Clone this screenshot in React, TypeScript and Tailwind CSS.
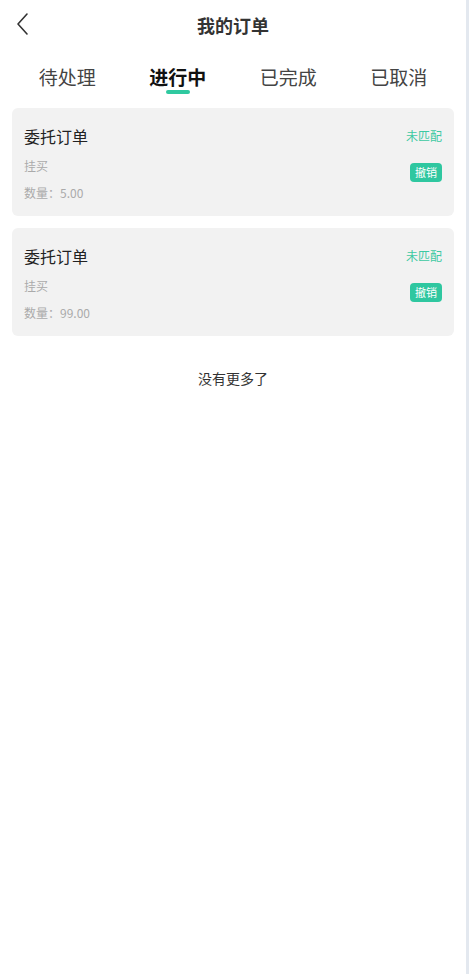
import React from "react";

const font = {
  fontFamily: '"Noto Sans CJK SC", "Noto Sans", "Liberation Sans", sans-serif',
};

const tabs = ["待处理", "进行中", "已完成", "已取消"];

const orders = [
  { title: "委托订单", type: "挂买", amount: "5.00" },
  { title: "委托订单", type: "挂买", amount: "99.00" },
];

export default function App() {
  return (
    <div
      className="flex min-h-[974px] w-[469px] bg-white text-[#333]"
      style={font}
    >
      <div className="flex-1">
        {/* Header */}
        <div className="relative flex h-[50px] items-center justify-center">
          <button className="absolute left-[14px] top-[12px] text-[#333]">
            <svg width="18" height="24" viewBox="0 0 18 24" fill="none">
              <path
                d="M13 2 L4 12 L13 22"
                stroke="currentColor"
                strokeWidth="1.6"
                strokeLinecap="round"
                strokeLinejoin="round"
              />
            </svg>
          </button>
          <h1 className="text-[18px] font-bold leading-none">我的订单</h1>
        </div>

        {/* Tabs */}
        <div className="grid grid-cols-4 px-[12px] pt-[14px]">
          {tabs.map((tab, i) => (
            <div key={tab} className="flex flex-col items-center">
              <span
                className={
                  i === 1
                    ? "text-[19px] font-bold leading-[26px] text-[#111]"
                    : "text-[19px] leading-[26px] text-[#444]"
                }
              >
                {tab}
              </span>
              <div
                className={
                  i === 1
                    ? "h-[4px] w-[24px] rounded-full bg-[#2fc9a0]"
                    : "h-[4px] w-[24px]"
                }
              />
            </div>
          ))}
        </div>

        {/* Orders */}
        <div className="mt-[14px] flex flex-col gap-[12px] px-[12px]">
          {orders.map((order, i) => (
            <div
              key={i}
              className="flex items-start justify-between rounded-[6px] bg-[#f2f2f2] px-[12px] pb-[15px] pt-[17px]"
            >
              <div className="flex flex-col">
                <span className="text-[16px] leading-[22px] text-[#222]">
                  {order.title}
                </span>
                <span className="mt-[11px] text-[12px] leading-[16px] text-[#aaa]">
                  {order.type}
                </span>
                <span className="mt-[11px] text-[12px] leading-[16px] text-[#aaa]">
                  数量：{order.amount}
                </span>
              </div>
              <div className="flex flex-col items-end">
                <span className="text-[12px] leading-[22px] text-[#3cc9a2]">
                  未匹配
                </span>
                <button className="mt-[16px] rounded-[4px] bg-[#2fc7a0] px-[5px] text-[11px] leading-[19px] text-white">
                  撤销
                </button>
              </div>
            </div>
          ))}
        </div>

        <div className="mt-[32px] text-center text-[14px] leading-[20px] text-[#333]">
          没有更多了
        </div>
      </div>
      <div className="w-[3px] bg-[#e3e8ef]" />
    </div>
  );
}
